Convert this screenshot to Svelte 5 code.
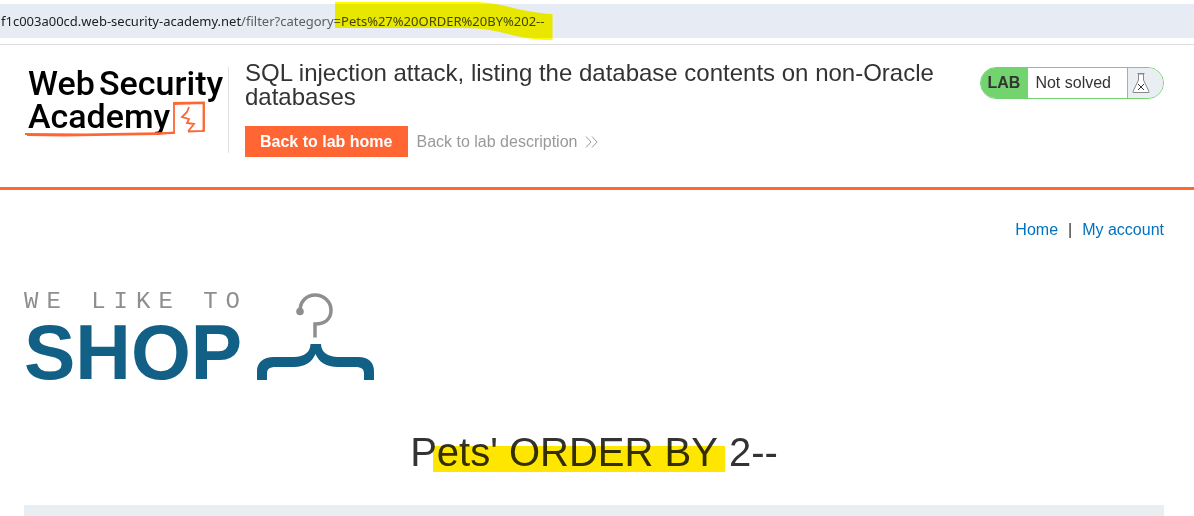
<script>
  const host = 'f1c003a00cd.web-security-academy.net';
  const path = '/filter?category=';
  const payload = 'Pets%27%20ORDER%20BY%202--';
</script>

<div class="address">
  <div class="url">
    <span class="host">{host}</span><span>{path}</span><span class="payload">{payload}<svg class="marker" viewBox="0 0 224 38" preserveAspectRatio="none" aria-hidden="true"><path d="M0 0H148C172 1 195 11 224 12V38C185 38 172 26 132 26H0Z" /></svg></span>
  </div>
</div>

<header>
  <a class="logo" href="#academy" aria-label="Web Security Academy">
    <svg width="204" height="80" viewBox="0 0 204 80">
      <g class="logo-text">
        <text x="4" y="28">Web</text>
        <text x="75" y="28">Security</text>
        <text x="4" y="61">Academy</text>
      </g>
      <g fill="none" stroke="#ff6633" stroke-width="1.800">
        <path d="M1 67L60 67.500 150 66V36L180 35.500V64L164 64.500" />
        <path d="M3 68L40 68.500 133 67 149.500 65.500M149 37L179.500 36 179.500 62 178.500 64.500" />
        <path d="M165 40L163 45 158 50 165 52 163 56 170 57 164 64.500" />
      </g>
    </svg>
  </a>
  <div class="intro">
    <h2>SQL injection attack, listing the database contents on non-Oracle databases</h2>
    <div class="actions">
      <a class="home" href="#lab">Back to lab home</a>
      <a class="description" href="#description">Back to lab description
        <svg width="13" height="12" viewBox="0 0 13 12" aria-hidden="true"><path d="M1 0.500L6 6 1 11.500M7 0.500L12 6 7 11.500" fill="none" stroke="#999" /></svg>
      </a>
    </div>
  </div>
  <div class="status">
    <strong>LAB</strong>
    <span class="state">Not solved</span>
    <span class="flask">
      <svg width="18" height="22" viewBox="0 0 18 22" aria-hidden="true">
        <path d="M6.500 2V8L1 19.500V20.500H17V19.500L11.500 8V2Z" fill="#fff" stroke="#888" />
        <path d="M5.500 1.500H12.500" stroke="#888" />
        <path d="M6 12L12 18M12 12L6 18" stroke="#333" />
      </svg>
    </span>
  </div>
</header>

<main>
  <nav><a href="#home">Home</a><span>|</span><a href="#account">My account</a></nav>
  <div class="shop">
    <div class="wordmark">
      <span class="tagline">WE LIKE TO</span>
      <span class="name">SHOP</span>
    </div>
    <svg width="118" height="88" viewBox="0 0 118 88" aria-hidden="true">
      <path d="M43 18C43 8 50 2 58 2C67 2 74 9 74 17C74 26 68 31 58 31V44.500" fill="none" stroke="#8e8e8e" stroke-width="3.500" />
      <circle cx="43" cy="18.500" r="3.800" fill="#8e8e8e" />
      <path d="M53.500 51H64C64 59 71 64 81 64H101C112 64 117 70 117 78V87H107V81C107 76 105 74 98 74H81C69 74 62 69 58.500 61C55 69 48 74 37 74H19C12 74 10 76 10 81V87H0V78C0 70 6 64 17 64H37C47 64 53.500 59 53.500 51Z" fill="#126085" />
    </svg>
  </div>
  <h1>P<span class="marked">ets' ORDER BY</span> 2--</h1>
  <div class="filters"></div>
</main>

<style>
  :global(body) {
    background: #fff;
    color: #333;
    font-family: "Liberation Sans", Arial, sans-serif;
    font-size: 16px;
  }
  a { text-decoration: none; }
  svg { display: block; overflow: visible; }
  .address {
    padding: 4px 0 6px;
    border-bottom: 1px solid #dedede;
  }
  .url {
    display: flex;
    align-items: center;
    height: 34px;
    padding-left: 1px;
    background: #e7ebf3;
    color: #5a5d61;
    font-family: "Noto Sans", "Open Sans", sans-serif;
    font-size: 13px;
    white-space: nowrap;
  }
  .host { color: #202124; }
  .payload { position: relative; color: #444746; }
  .marker {
    position: absolute;
    left: -6px;
    top: -10px;
    width: calc(100% + 14px);
    height: 38px;
    fill: #fffb00;
    mix-blend-mode: multiply;
  }
  header {
    display: flex;
    align-items: flex-start;
    padding: 16px 30px 30px 24px;
    border-bottom: 3px solid #ff6633;
  }
  .logo {
    margin-top: 6px;
    padding-bottom: 6px;
    border-right: 1px solid #e0e0e0;
  }
  .logo-text {
    font-family: Roboto, sans-serif;
    font-size: 34px;
    font-weight: 500;
    fill: #000;
  }
  .intro { flex: 1; padding: 0 30px 0 16px; }
  h2 {
    margin: 0 0 17px;
    font-size: 24px;
    font-weight: 400;
    line-height: 24px;
  }
  .actions { display: flex; gap: 8px; line-height: 31px; }
  .home {
    padding: 0 16px 0 15px;
    background: #ff6633;
    color: #fff;
    font-weight: 700;
  }
  .description { display: flex; align-items: center; gap: 8px; color: #999; }
  .status {
    display: flex;
    box-sizing: border-box;
    height: 32px;
    margin-top: 6px;
    overflow: hidden;
    border: 1px solid #72d36f;
    border-radius: 16px;
    line-height: 30px;
    white-space: nowrap;
  }
  .status strong { padding: 0 8px 0 7px; background: #72d36f; }
  .state { padding: 0 16px 0 7px; }
  .flask {
    display: flex;
    align-items: center;
    padding: 0 13px 0 4px;
    border-left: 1px solid #72d36f;
    background: #e9eef2;
  }
  main { padding: 30px 30px 0 24px; }
  nav { display: flex; justify-content: flex-end; gap: 10px; line-height: 20px; }
  nav a { color: #0071bc; }
  .shop { display: flex; align-items: flex-start; gap: 16px; margin-top: 53px; }
  .wordmark { display: flex; flex-direction: column; width: 217px; white-space: nowrap; }
  .tagline {
    color: #8e8e8e;
    font-family: "Liberation Mono", "Courier New", monospace;
    font-size: 24px;
    letter-spacing: 8px;
    line-height: 18px;
  }
  .name {
    color: #126085;
    font-size: 77px;
    font-weight: 700;
    line-height: 82px;
  }
  h1 {
    margin: 39px 0 33px;
    font-size: 40px;
    font-weight: 400;
    line-height: 40px;
    text-align: center;
  }
  .marked { position: relative; }
  .marked::after {
    content: "";
    position: absolute;
    inset: 16px -7px 2px -4px;
    background: #ffe600;
    mix-blend-mode: multiply;
  }
  .filters { height: 11px; background: #e9eef2; }
</style>
